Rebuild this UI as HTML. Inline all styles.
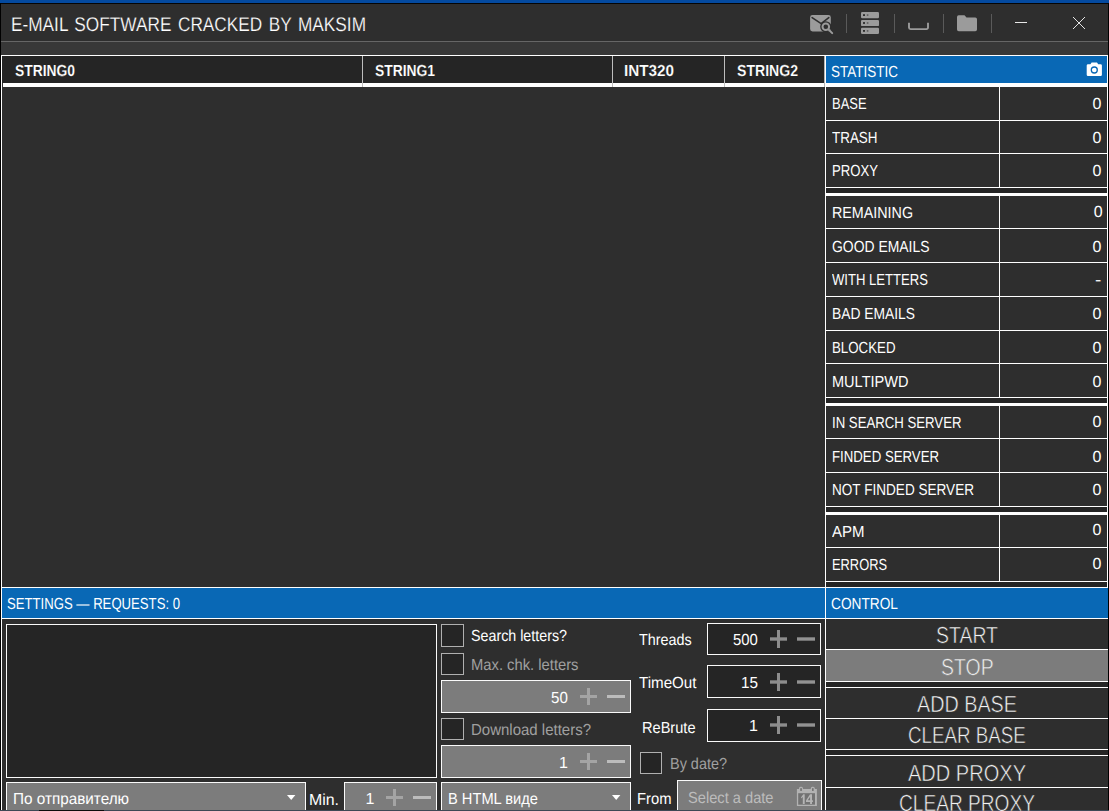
<!DOCTYPE html>
<html>
<head>
<meta charset="utf-8">
<title>E-MAIL SOFTWARE</title>
<style>
html,body{margin:0;padding:0;background:#2e2e2e;}
body{width:1109px;height:811px;overflow:hidden;background:#2e2e2e;font-family:"Liberation Sans",sans-serif;color:#fff;position:relative;text-rendering:geometricPrecision;}
.a{position:absolute;}
.t{position:absolute;white-space:nowrap;line-height:1;transform-origin:0 0;}
</style>
</head>
<body>
<div class="a" style="left:0px;top:0px;width:1109px;height:3px;background:#044aa0;"></div>
<div class="a" style="left:0px;top:3px;width:1109px;height:1px;background:#050505;"></div>
<div class="a" style="left:0px;top:3px;width:1px;height:808px;background:#000;"></div>
<div class="a" style="left:1108px;top:3px;width:1px;height:808px;background:#000;"></div>
<div class="a" style="left:1px;top:41px;width:1107px;height:1px;background:#666;"></div>
<div class="a" style="left:1px;top:42px;width:1107px;height:13px;background:#383838;"></div>
<svg class="a" style="left:800px;top:5px" width="300" height="36" viewBox="0 0 300 36">
<!-- mail search -->
<rect x="10.100" y="10.100" width="20.700" height="16.400" rx="2.400" fill="#9b9b9b"/>
<path d="M12.100 12.700L21.100 18.600L28.800 12.700" stroke="#2e2e2e" stroke-width="1.600" fill="none" stroke-linecap="round"/>
<circle cx="25.800" cy="21.800" r="5.600" fill="#2e2e2e"/>
<path d="M28.300 24.300l3.900 3.800" stroke="#9b9b9b" stroke-width="2" stroke-linecap="round"/>
<circle cx="25.800" cy="21.800" r="3.300" fill="#2e2e2e" stroke="#9b9b9b" stroke-width="2"/>
<!-- server -->
<g fill="#9b9b9b"><rect x="61" y="7" width="18" height="6.200" rx="1.200"/><rect x="61" y="14.900" width="18" height="6.200" rx="1.200"/><rect x="61" y="22.800" width="18" height="6.200" rx="1.200"/>
<!-- folder -->
<path d="M157 12a1.700 1.700 0 0 1 1.700-1.700h5.800l2 2.200h8.800a1.700 1.700 0 0 1 1.700 1.700v10.300a1.700 1.700 0 0 1-1.700 1.700h-16.600a1.700 1.700 0 0 1-1.700-1.700z"/>
</g>
<g fill="#2e2e2e"><rect x="63" y="9.200" width="2" height="1.800"/><rect x="63" y="17.100" width="2" height="1.800"/><rect x="63" y="25" width="2" height="1.800"/></g>
<g fill="#626262"><rect x="66.800" y="9.200" width="1.600" height="1.800"/><rect x="66.800" y="17.100" width="1.600" height="1.800"/><rect x="66.800" y="25" width="1.600" height="1.800"/></g>
<path d="M109 17.700v4.900a1.500 1.500 0 0 0 1.500 1.500h16a1.500 1.500 0 0 0 1.500-1.500v-4.900" stroke="#9b9b9b" stroke-width="1.900" fill="none"/>
<g fill="#5a5a5a"><rect x="46" y="9" width="1" height="19"/><rect x="94" y="9" width="1" height="19"/><rect x="143" y="9" width="1" height="19"/><rect x="191" y="9" width="1" height="19"/></g>
<rect x="215" y="17" width="12" height="1" fill="#e8e8e8"/>
<path d="M273 12l12 12M285 12l-12 12" stroke="#e4e4e4" stroke-width="1"/>
</svg>
<div class="a" style="left:2px;top:56px;width:823px;height:27px;background:#252525;"></div>
<div class="a" style="left:1px;top:55px;width:1107px;height:1px;background:#fff;"></div>
<div class="a" style="left:3px;top:83px;width:1105px;height:4px;background:#fff;"></div>
<div class="a" style="left:1px;top:55px;width:1px;height:756px;background:#fff;"></div>
<div class="a" style="left:362px;top:56px;width:1px;height:31px;background:#bdbdbd;"></div>
<div class="a" style="left:612px;top:56px;width:1px;height:31px;background:#bdbdbd;"></div>
<div class="a" style="left:724px;top:56px;width:1px;height:31px;background:#bdbdbd;"></div>
<div class="a" style="left:825px;top:55px;width:1px;height:756px;background:#fff;"></div>
<div class="a" style="left:824px;top:56px;width:1px;height:31px;background:#b4b4b4;"></div>
<div class="a" style="left:1107px;top:55px;width:1px;height:532px;background:#fff;"></div>
<div class="a" style="left:826px;top:56px;width:281px;height:27px;background:#0968b5;"></div>
<svg class="a" style="left:1086px;top:62px" width="17" height="15" viewBox="0 0 17 15"><path d="M5.600 0.500h5.400l1.200 1.800h2.400a1.300 1.300 0 0 1 1.300 1.300v9.100a1.300 1.300 0 0 1-1.300 1.300h-12.600a1.300 1.300 0 0 1-1.300-1.300v-9.100a1.300 1.300 0 0 1 1.300-1.300h2.400z" fill="#fff"/><circle cx="8.300" cy="8" r="3" fill="none" stroke="#0968b5" stroke-width="1.300"/></svg>
<div class="a" style="left:826px;top:188px;width:281px;height:5px;background:#252525;"></div>
<div class="a" style="left:826px;top:398px;width:281px;height:5px;background:#252525;"></div>
<div class="a" style="left:826px;top:507px;width:281px;height:5px;background:#252525;"></div>
<div class="a" style="left:826px;top:582px;width:281px;height:5px;background:#252525;"></div>
<div class="a" style="left:826px;top:120px;width:281px;height:1px;background:#fff;"></div>
<div class="a" style="left:826px;top:153px;width:281px;height:1px;background:#fff;"></div>
<div class="a" style="left:826px;top:187px;width:281px;height:1px;background:#fff;"></div>
<div class="a" style="left:826px;top:228px;width:281px;height:1px;background:#fff;"></div>
<div class="a" style="left:826px;top:262px;width:281px;height:1px;background:#fff;"></div>
<div class="a" style="left:826px;top:296px;width:281px;height:1px;background:#fff;"></div>
<div class="a" style="left:826px;top:330px;width:281px;height:1px;background:#fff;"></div>
<div class="a" style="left:826px;top:363px;width:281px;height:1px;background:#fff;"></div>
<div class="a" style="left:826px;top:397px;width:281px;height:1px;background:#fff;"></div>
<div class="a" style="left:826px;top:438px;width:281px;height:1px;background:#fff;"></div>
<div class="a" style="left:826px;top:472px;width:281px;height:1px;background:#fff;"></div>
<div class="a" style="left:826px;top:506px;width:281px;height:1px;background:#fff;"></div>
<div class="a" style="left:826px;top:547px;width:281px;height:1px;background:#fff;"></div>
<div class="a" style="left:826px;top:581px;width:281px;height:1px;background:#fff;"></div>
<div class="a" style="left:826px;top:193px;width:281px;height:3px;background:#fff;"></div>
<div class="a" style="left:826px;top:403px;width:281px;height:3px;background:#fff;"></div>
<div class="a" style="left:826px;top:512px;width:281px;height:3px;background:#fff;"></div>
<div class="a" style="left:999px;top:87px;width:1px;height:100px;background:#fff;"></div>
<div class="a" style="left:999px;top:196px;width:1px;height:201px;background:#fff;"></div>
<div class="a" style="left:999px;top:406px;width:1px;height:100px;background:#fff;"></div>
<div class="a" style="left:999px;top:515px;width:1px;height:66px;background:#fff;"></div>
<div class="a" style="left:1px;top:587px;width:1107px;height:1px;background:#fff;"></div>
<div class="a" style="left:2px;top:588px;width:823px;height:30px;background:#0968b5;"></div>
<div class="a" style="left:826px;top:588px;width:282px;height:30px;background:#0968b5;"></div>
<div class="a" style="left:1px;top:618px;width:1107px;height:1px;background:#fff;"></div>
<div class="a" style="left:826px;top:650px;width:282px;height:31px;background:#7c7c7c;"></div>
<div class="a" style="left:826px;top:649px;width:282px;height:1px;background:#fff;"></div>
<div class="a" style="left:826px;top:681px;width:282px;height:1px;background:#fff;"></div>
<div class="a" style="left:826px;top:687px;width:282px;height:1px;background:#fff;"></div>
<div class="a" style="left:826px;top:718px;width:282px;height:1px;background:#fff;"></div>
<div class="a" style="left:826px;top:749px;width:282px;height:1px;background:#fff;"></div>
<div class="a" style="left:826px;top:755px;width:282px;height:1px;background:#fff;"></div>
<div class="a" style="left:826px;top:787px;width:282px;height:1px;background:#fff;"></div>
<div class="a" style="left:826px;top:682px;width:282px;height:5px;background:#252525;"></div>
<div class="a" style="left:826px;top:750px;width:282px;height:5px;background:#252525;"></div>
<div class="a" style="left:6px;top:624px;width:429px;height:152px;background:#252525;border:1px solid #fafafa;"></div>
<div class="a" style="left:6px;top:782px;width:298px;height:32px;background:#7c7c7c;border:1px solid #fafafa;"></div>
<svg class="a" style="left:287px;top:795px" width="10" height="6"><path d="M0 0h8.400l-4.200 5z" fill="#fff"/></svg>
<div class="a" style="left:344px;top:782px;width:91px;height:32px;background:#7c7c7c;border:1px solid #fafafa;"></div>
<div class="a" style="left:386px;top:796px;width:17px;height:3px;background:#a4a4a4;"></div>
<div class="a" style="left:393px;top:789px;width:3px;height:17px;background:#a4a4a4;"></div>
<div class="a" style="left:413px;top:796px;width:18px;height:3px;background:#bcbcbc;"></div>
<div class="a" style="left:441px;top:624px;width:21px;height:21px;background:#252525;border:1px solid #b0b0b0;"></div>
<div class="a" style="left:441px;top:653px;width:21px;height:20px;background:#252525;border:1px solid #b0b0b0;"></div>
<div class="a" style="left:441px;top:680px;width:188px;height:31px;background:#7c7c7c;border:1px solid #fafafa;"></div>
<div class="a" style="left:580px;top:695px;width:17px;height:3px;background:#a4a4a4;"></div>
<div class="a" style="left:587px;top:688px;width:3px;height:17px;background:#a4a4a4;"></div>
<div class="a" style="left:607px;top:695px;width:18px;height:3px;background:#bcbcbc;"></div>
<div class="a" style="left:441px;top:718px;width:21px;height:20px;background:#252525;border:1px solid #b0b0b0;"></div>
<div class="a" style="left:441px;top:745px;width:188px;height:31px;background:#7c7c7c;border:1px solid #fafafa;"></div>
<div class="a" style="left:580px;top:760px;width:17px;height:3px;background:#a4a4a4;"></div>
<div class="a" style="left:587px;top:753px;width:3px;height:17px;background:#a4a4a4;"></div>
<div class="a" style="left:607px;top:760px;width:18px;height:3px;background:#bcbcbc;"></div>
<div class="a" style="left:441px;top:782px;width:188px;height:32px;background:#7c7c7c;border:1px solid #fafafa;"></div>
<svg class="a" style="left:612px;top:795px" width="10" height="6"><path d="M0 0h8.400l-4.200 5z" fill="#fff"/></svg>
<div class="a" style="left:707px;top:623px;width:112px;height:30px;background:#252525;border:1px solid #fafafa;"></div>
<div class="a" style="left:770px;top:637px;width:17px;height:4px;background:#6c6c6c;"></div>
<div class="a" style="left:770px;top:638px;width:17px;height:2px;background:#8d8d8d;"></div>
<div class="a" style="left:777px;top:630px;width:3px;height:18px;background:#8d8d8d;"></div>
<div class="a" style="left:797px;top:637px;width:18px;height:4px;background:#707070;"></div>
<div class="a" style="left:797px;top:638px;width:18px;height:2px;background:#929292;"></div>
<div class="a" style="left:707px;top:665px;width:112px;height:31px;background:#252525;border:1px solid #fafafa;"></div>
<div class="a" style="left:770px;top:680px;width:17px;height:4px;background:#6c6c6c;"></div>
<div class="a" style="left:770px;top:681px;width:17px;height:2px;background:#8d8d8d;"></div>
<div class="a" style="left:777px;top:673px;width:3px;height:18px;background:#8d8d8d;"></div>
<div class="a" style="left:797px;top:680px;width:18px;height:4px;background:#707070;"></div>
<div class="a" style="left:797px;top:681px;width:18px;height:2px;background:#929292;"></div>
<div class="a" style="left:707px;top:709px;width:112px;height:31px;background:#252525;border:1px solid #fafafa;"></div>
<div class="a" style="left:770px;top:723px;width:17px;height:4px;background:#6c6c6c;"></div>
<div class="a" style="left:770px;top:724px;width:17px;height:2px;background:#8d8d8d;"></div>
<div class="a" style="left:777px;top:716px;width:3px;height:18px;background:#8d8d8d;"></div>
<div class="a" style="left:797px;top:723px;width:18px;height:4px;background:#707070;"></div>
<div class="a" style="left:797px;top:724px;width:18px;height:2px;background:#929292;"></div>
<div class="a" style="left:640px;top:752px;width:20px;height:20px;background:#252525;border:1px solid #b0b0b0;"></div>
<div class="a" style="left:677px;top:780px;width:143px;height:34px;background:#7c7c7c;border:1px solid #fafafa;"></div>
<svg class="a" style="left:796px;top:785px" width="24" height="24" viewBox="0 0 24 24"><rect x="0.900" y="4" width="20" height="17" fill="#b2b2b2"/><rect x="2.200" y="8.200" width="16.800" height="11.500" fill="#727272"/><rect x="3" y="1.800" width="4" height="4.500" rx="1.600" fill="#b2b2b2"/><rect x="14.800" y="1.800" width="4" height="4.500" rx="1.600" fill="#b2b2b2"/><rect x="4.300" y="3.100" width="1.500" height="3" rx="0.700" fill="#6c6c6c"/><rect x="16.100" y="3.100" width="1.500" height="3" rx="0.700" fill="#6c6c6c"/><path d="M5.100 12.300L7.300 9.300H8.700V18.900H6.800V12L5.100 13.600Z" fill="#b4b4b4"/><path fill-rule="evenodd" d="M14 9.300H16V15.300H16.900V17H16V18.900H14.100V17H10V15.400ZM14.100 11.800L11.800 15.300H14.100Z" fill="#b4b4b4"/></svg>
<div class="a" style="left:0px;top:810px;width:1109px;height:1px;background:#3c4855;"></div>
<div class="a" style="left:39px;top:810px;width:65px;height:1px;background:#0c0c0c;"></div>
<div class="t" style="left:11.00px;top:16px;font-size:19.8px;color:#ffffff;word-spacing:2px;-webkit-text-stroke:0.22px #2e2e2e;transform:scaleX(0.8715);">E-MAIL SOFTWARE CRACKED BY MAKSIM</div>
<div class="t" style="left:15.00px;top:64px;font-size:16px;color:#fff;font-weight:bold;-webkit-text-stroke:0.15px #252525;transform:scaleX(0.8653);">STRING0</div>
<div class="t" style="left:375.00px;top:64px;font-size:16px;color:#fff;font-weight:bold;-webkit-text-stroke:0.15px #252525;transform:scaleX(0.8653);">STRING1</div>
<div class="t" style="left:624.00px;top:64px;font-size:16px;color:#fff;font-weight:bold;-webkit-text-stroke:0.15px #252525;transform:scaleX(0.9529);">INT320</div>
<div class="t" style="left:737.00px;top:64px;font-size:16px;color:#fff;font-weight:bold;-webkit-text-stroke:0.15px #252525;transform:scaleX(0.8797);">STRING2</div>
<div class="t" style="left:831.00px;top:65px;font-size:16px;color:#fff;transform:scaleX(0.8438);">STATISTIC</div>
<div class="t" style="left:832.00px;top:97px;font-size:16px;color:#fff;transform:scaleX(0.8082);">BASE</div>
<div class="t" style="left:1092.59px;top:97px;font-size:16px;color:#fff;">0</div>
<div class="t" style="left:832.00px;top:131px;font-size:16px;color:#fff;transform:scaleX(0.8390);">TRASH</div>
<div class="t" style="left:1092.59px;top:131px;font-size:16px;color:#fff;">0</div>
<div class="t" style="left:832.00px;top:164px;font-size:16px;color:#fff;transform:scaleX(0.8212);">PROXY</div>
<div class="t" style="left:1092.59px;top:164px;font-size:16px;color:#fff;">0</div>
<div class="t" style="left:832.00px;top:206px;font-size:16px;color:#fff;transform:scaleX(0.8933);">REMAINING</div>
<div class="t" style="left:1093.79px;top:205px;font-size:16px;color:#fff;">0</div>
<div class="t" style="left:832.00px;top:240px;font-size:16px;color:#fff;transform:scaleX(0.8703);">GOOD EMAILS</div>
<div class="t" style="left:1092.59px;top:240px;font-size:16px;color:#fff;">0</div>
<div class="t" style="left:832.00px;top:273px;font-size:16px;color:#fff;transform:scaleX(0.8181);">WITH LETTERS</div>
<div class="t" style="left:1094.70px;top:273px;font-size:16px;color:#fff;transform:scaleX(1.1824);">-</div>
<div class="t" style="left:832.00px;top:307px;font-size:16px;color:#fff;transform:scaleX(0.8643);">BAD EMAILS</div>
<div class="t" style="left:1092.59px;top:307px;font-size:16px;color:#fff;">0</div>
<div class="t" style="left:832.00px;top:341px;font-size:16px;color:#fff;transform:scaleX(0.8304);">BLOCKED</div>
<div class="t" style="left:1092.59px;top:341px;font-size:16px;color:#fff;">0</div>
<div class="t" style="left:832.00px;top:375px;font-size:16px;color:#fff;transform:scaleX(0.9092);">MULTIPWD</div>
<div class="t" style="left:1092.59px;top:375px;font-size:16px;color:#fff;">0</div>
<div class="t" style="left:832.00px;top:416px;font-size:16px;color:#fff;transform:scaleX(0.8244);">IN SEARCH SERVER</div>
<div class="t" style="left:1092.59px;top:415px;font-size:16px;color:#fff;">0</div>
<div class="t" style="left:832.00px;top:450px;font-size:16px;color:#fff;transform:scaleX(0.8262);">FINDED SERVER</div>
<div class="t" style="left:1092.59px;top:450px;font-size:16px;color:#fff;">0</div>
<div class="t" style="left:832.00px;top:483px;font-size:16px;color:#fff;transform:scaleX(0.8481);">NOT FINDED SERVER</div>
<div class="t" style="left:1092.59px;top:483px;font-size:16px;color:#fff;">0</div>
<div class="t" style="left:832.00px;top:525px;font-size:16px;color:#fff;transform:scaleX(0.9374);">APM</div>
<div class="t" style="left:1092.59px;top:523px;font-size:16px;color:#fff;">0</div>
<div class="t" style="left:832.00px;top:558px;font-size:16px;color:#fff;transform:scaleX(0.8035);">ERRORS</div>
<div class="t" style="left:1092.59px;top:557px;font-size:16px;color:#fff;">0</div>
<div class="t" style="left:7.00px;top:597px;font-size:16px;color:#fff;transform:scaleX(0.8211);">SETTINGS — REQUESTS: 0</div>
<div class="t" style="left:831.00px;top:597px;font-size:16px;color:#fff;transform:scaleX(0.8564);">CONTROL</div>
<div class="t" style="left:935.80px;top:624px;font-size:23.2px;color:#f4f4f4;-webkit-text-stroke:0.55px #2e2e2e;transform:scaleX(0.8393);">START</div>
<div class="t" style="left:940.50px;top:656px;font-size:23.2px;color:#f0f0f0;-webkit-text-stroke:0.55px #7c7c7c;transform:scaleX(0.8387);">STOP</div>
<div class="t" style="left:916.80px;top:693px;font-size:23.2px;color:#f4f4f4;-webkit-text-stroke:0.55px #2e2e2e;transform:scaleX(0.8528);">ADD BASE</div>
<div class="t" style="left:907.90px;top:724px;font-size:23.2px;color:#f4f4f4;-webkit-text-stroke:0.55px #2e2e2e;transform:scaleX(0.8089);">CLEAR BASE</div>
<div class="t" style="left:907.80px;top:762px;font-size:23.2px;color:#f4f4f4;-webkit-text-stroke:0.55px #2e2e2e;transform:scaleX(0.8640);">ADD PROXY</div>
<div class="t" style="left:898.80px;top:792px;font-size:23.2px;color:#f4f4f4;-webkit-text-stroke:0.55px #2e2e2e;transform:scaleX(0.8245);">CLEAR PROXY</div>
<div class="t" style="left:12.80px;top:792px;font-size:16px;color:#fff;transform:scaleX(0.9550);">По отправителю</div>
<div class="t" style="left:308.80px;top:793px;font-size:16px;color:#fff;transform:scaleX(0.9922);">Min.</div>
<div class="t" style="left:365.39px;top:792px;font-size:16px;color:#fff;">1</div>
<div class="t" style="left:471.00px;top:629px;font-size:16px;color:#fff;transform:scaleX(0.8921);">Search letters?</div>
<div class="t" style="left:471.00px;top:658px;font-size:16px;color:#a0a0a0;transform:scaleX(0.9229);">Max. chk. letters</div>
<div class="t" style="left:551.00px;top:691px;font-size:16px;color:#fff;transform:scaleX(0.9440);">50</div>
<div class="t" style="left:471.00px;top:723px;font-size:16px;color:#a0a0a0;transform:scaleX(0.9369);">Download letters?</div>
<div class="t" style="left:559.09px;top:756px;font-size:16px;color:#fff;">1</div>
<div class="t" style="left:448.00px;top:792px;font-size:16px;color:#fff;transform:scaleX(0.9165);">В HTML виде</div>
<div class="t" style="left:639.20px;top:633px;font-size:16px;color:#fff;transform:scaleX(0.8960);">Threads</div>
<div class="t" style="left:733.00px;top:633px;font-size:16px;color:#fff;transform:scaleX(0.9287);">500</div>
<div class="t" style="left:639.20px;top:676px;font-size:16px;color:#fff;transform:scaleX(0.9465);">TimeOut</div>
<div class="t" style="left:741.00px;top:676px;font-size:16px;color:#fff;transform:scaleX(0.9552);">15</div>
<div class="t" style="left:641.80px;top:721px;font-size:16px;color:#fff;transform:scaleX(0.9114);">ReBrute</div>
<div class="t" style="left:749.09px;top:719px;font-size:16px;color:#fff;">1</div>
<div class="t" style="left:669.50px;top:757px;font-size:16px;color:#a0a0a0;transform:scaleX(0.9025);">By date?</div>
<div class="t" style="left:637.30px;top:792px;font-size:16px;color:#fff;transform:scaleX(0.9242);">From</div>
<div class="t" style="left:688.00px;top:791px;font-size:16px;color:#bcbcbc;transform:scaleX(0.9154);">Select a date</div>
</body>
</html>
